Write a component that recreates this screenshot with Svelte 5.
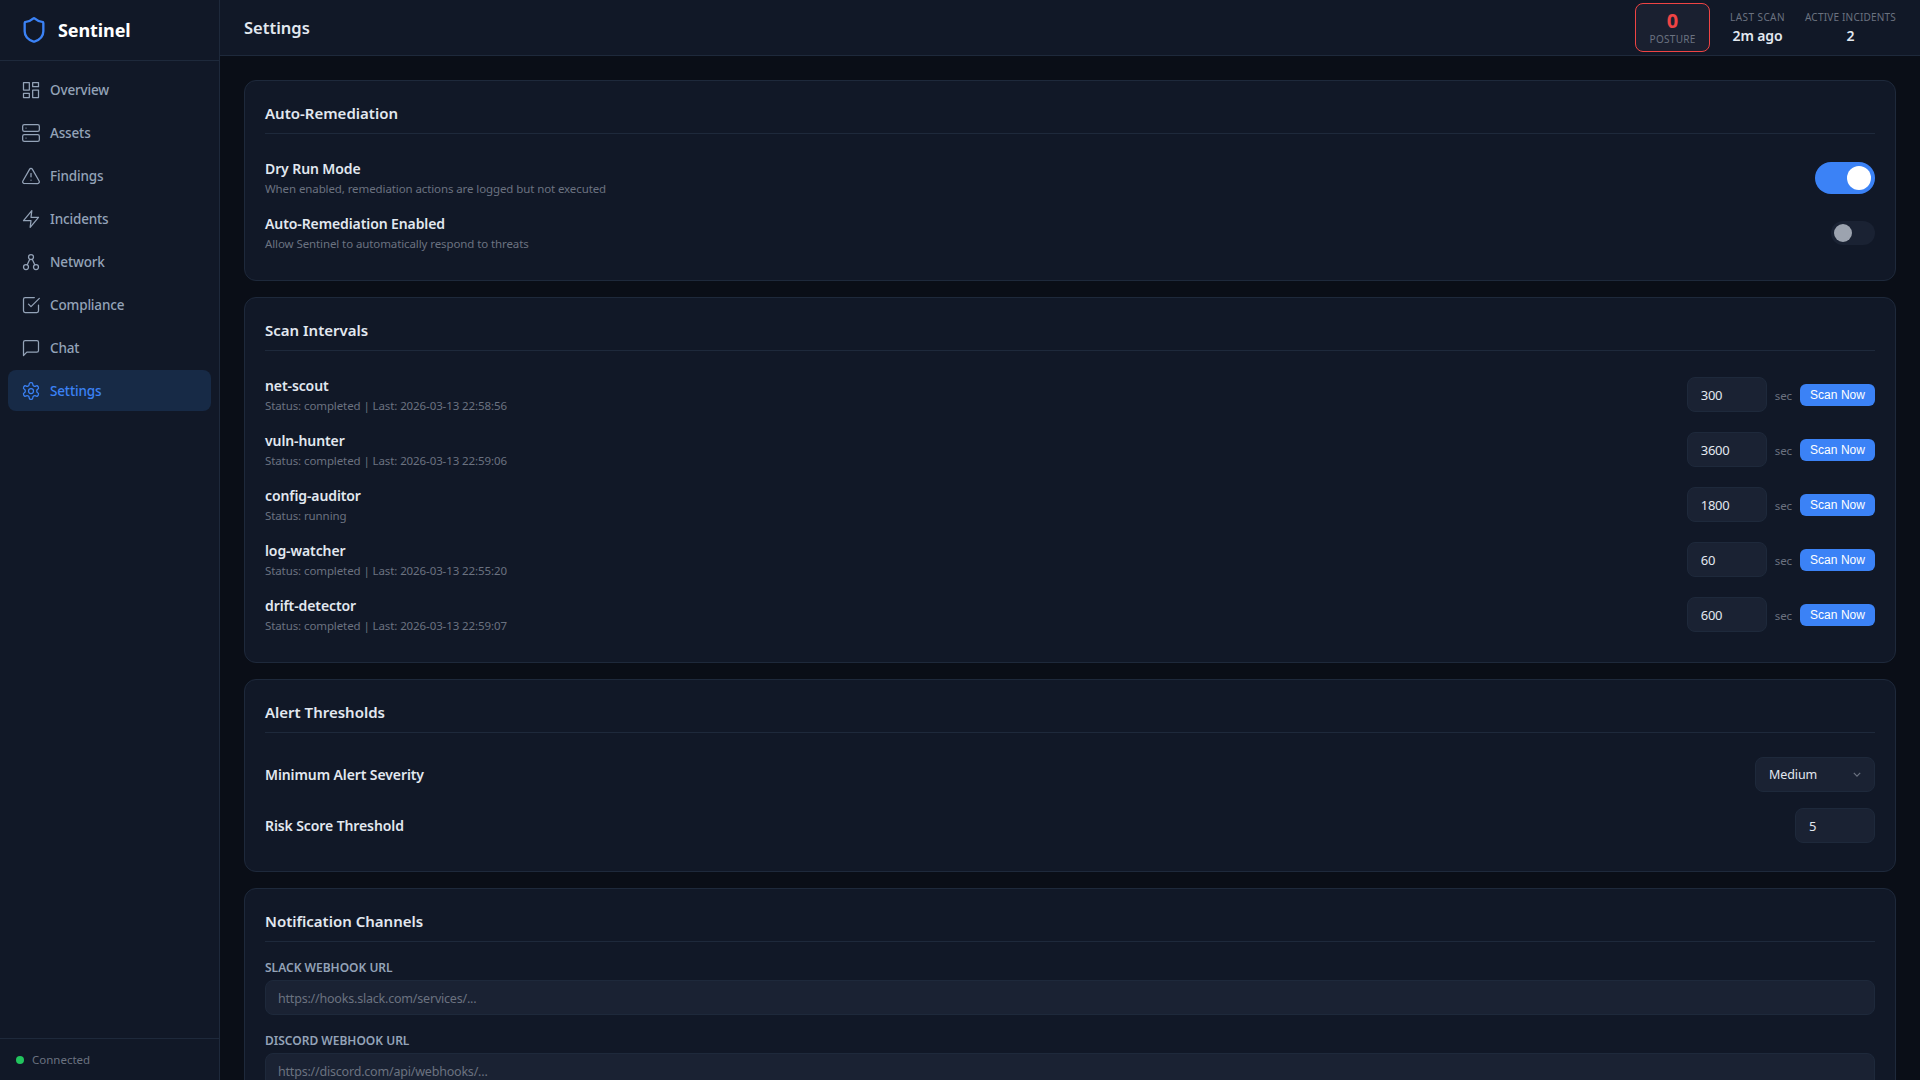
<script>
  const nav = [
    { label: 'Overview', d: ['M3 3h7v9H3z', 'M14 3h7v5h-7z', 'M14 12h7v9h-7z', 'M3 16h7v5H3z'] },
    { label: 'Assets', d: ['M4 2h16a2 2 0 0 1 2 2v4a2 2 0 0 1-2 2H4a2 2 0 0 1-2-2V4a2 2 0 0 1 2-2z', 'M4 14h16a2 2 0 0 1 2 2v4a2 2 0 0 1-2 2H4a2 2 0 0 1-2-2v-4a2 2 0 0 1 2-2z', 'M6 6h.01', 'M6 18h.01'] },
    { label: 'Findings', d: ['m21.73 18-8-14a2 2 0 0 0-3.48 0l-8 14A2 2 0 0 0 4 21h16a2 2 0 0 0 1.73-3Z', 'M12 9v4', 'M12 17h.01'] },
    { label: 'Incidents', d: ['M13 2 3 14h9l-1 8 10-12h-9l1-8z'] },
    { label: 'Network', d: ['M12 3a3 3 0 1 0 0 6 3 3 0 0 0 0-6z', 'M6 15a3 3 0 1 0 0 6 3 3 0 0 0 0-6z', 'M18 15a3 3 0 1 0 0 6 3 3 0 0 0 0-6z', 'M10.5 8.6 7.5 15.4', 'M13.5 8.6l3 6.8'] },
    { label: 'Compliance', d: ['m9 11 3 3L22 4', 'M21 12v7a2 2 0 0 1-2 2H5a2 2 0 0 1-2-2V5a2 2 0 0 1 2-2h11'] },
    { label: 'Chat', d: ['M21 15a2 2 0 0 1-2 2H7l-4 4V5a2 2 0 0 1 2-2h14a2 2 0 0 1 2 2z'] },
    { label: 'Settings', active: true, d: ['M12.22 2h-.44a2 2 0 0 0-2 2v.18a2 2 0 0 1-1 1.73l-.43.25a2 2 0 0 1-2 0l-.15-.08a2 2 0 0 0-2.73.73l-.22.38a2 2 0 0 0 .73 2.73l.15.1a2 2 0 0 1 1 1.72v.51a2 2 0 0 1-1 1.74l-.15.09a2 2 0 0 0-.73 2.73l.22.38a2 2 0 0 0 2.73.73l.15-.08a2 2 0 0 1 2 0l.43.25a2 2 0 0 1 1 1.73V20a2 2 0 0 0 2 2h.44a2 2 0 0 0 2-2v-.18a2 2 0 0 1 1-1.73l.43-.25a2 2 0 0 1 2 0l.15.08a2 2 0 0 0 2.73-.73l.22-.39a2 2 0 0 0-.73-2.73l-.15-.08a2 2 0 0 1-1-1.74v-.5a2 2 0 0 1 1-1.74l.15-.09a2 2 0 0 0 .73-2.73l-.22-.38a2 2 0 0 0-2.73-.73l-.15.08a2 2 0 0 1-2 0l-.43-.25a2 2 0 0 1-1-1.73V4a2 2 0 0 0-2-2z', 'M12 9a3 3 0 1 0 0 6 3 3 0 0 0 0-6z'] }
  ];
  const scans = [
    { name: 'net-scout', status: 'Status: completed | Last: 2026-03-13 22:58:56', value: '300' },
    { name: 'vuln-hunter', status: 'Status: completed | Last: 2026-03-13 22:59:06', value: '3600' },
    { name: 'config-auditor', status: 'Status: running', value: '1800' },
    { name: 'log-watcher', status: 'Status: completed | Last: 2026-03-13 22:55:20', value: '60' },
    { name: 'drift-detector', status: 'Status: completed | Last: 2026-03-13 22:59:07', value: '600' }
  ];
</script>

<div class="app">
  <aside class="sidebar">
    <div class="brand">
      <svg viewBox="0 0 24 24" width="28" height="28" fill="none" stroke="#3b82f6" stroke-width="2" stroke-linecap="round" stroke-linejoin="round"><path d="M20 13c0 5-3.5 7.5-7.66 8.95a1 1 0 0 1-.67-.01C7.5 20.5 4 18 4 13V6a1 1 0 0 1 1-1c2 0 4.5-1.2 6.24-2.72a1.17 1.17 0 0 1 1.52 0C14.51 3.81 17 5 19 5a1 1 0 0 1 1 1z"/></svg>
      <span>Sentinel</span>
    </div>
    <nav class="nav">
      {#each nav as item}
        <div class="nav-item" class:active={item.active}>
          <svg viewBox="0 0 24 24" width="20" height="20" fill="none" stroke="currentColor" stroke-width="1.5" stroke-linecap="round" stroke-linejoin="round">
            {#each item.d as d}<path {d} />{/each}
          </svg>
          <span>{item.label}</span>
        </div>
      {/each}
    </nav>
    <div class="conn"><i></i><span>Connected</span></div>
  </aside>
  <div class="main">
    <header class="top">
      <h1>Settings</h1>
      <div class="stats">
        <div class="posture"><b>0</b><small>POSTURE</small></div>
        <div class="stat first"><small>LAST SCAN</small><b>2m ago</b></div>
        <div class="stat"><small>ACTIVE INCIDENTS</small><b>2</b></div>
      </div>
    </header>
    <main class="content">
      <section class="card">
        <h2>Auto-Remediation</h2>
        <div class="row">
          <div class="txt"><div class="lbl">Dry Run Mode</div><div class="sub">When enabled, remediation actions are logged but not executed</div></div>
          <div class="toggle big"><i></i></div>
        </div>
        <div class="row">
          <div class="txt"><div class="lbl">Auto-Remediation Enabled</div><div class="sub">Allow Sentinel to automatically respond to threats</div></div>
          <div class="toggle"><i></i></div>
        </div>
      </section>
      <section class="card">
        <h2>Scan Intervals</h2>
        {#each scans as s}
          <div class="row">
            <div class="txt"><div class="lbl">{s.name}</div><div class="sub">{s.status}</div></div>
            <div class="ctl">
              <input class="field" value={s.value} />
              <span class="sec">sec</span>
              <button>Scan Now</button>
            </div>
          </div>
        {/each}
      </section>
      <section class="card">
        <h2>Alert Thresholds</h2>
        <div class="row">
          <div class="lbl">Minimum Alert Severity</div>
          <div class="select"><span>Medium</span>
            <svg viewBox="0 0 10 6" width="8" height="5" fill="none" stroke="#6b7280" stroke-width="1.5"><path d="M1 1l4 4 4-4"/></svg>
          </div>
        </div>
        <div class="row">
          <div class="lbl">Risk Score Threshold</div>
          <input class="field" value="5" />
        </div>
      </section>
      <section class="card">
        <h2>Notification Channels</h2>
        <label class="cap" for="slack">SLACK WEBHOOK URL</label>
        <input id="slack" class="wide" placeholder="https://hooks.slack.com/services/..." />
        <label class="cap" for="discord">DISCORD WEBHOOK URL</label>
        <input id="discord" class="wide" placeholder="https://discord.com/api/webhooks/..." />
      </section>
    </main>
  </div>
</div>

<style>
  :global(body) { margin: 0; background: #0a0e17; overflow: hidden; }
  .app { display: flex; height: 1080px; overflow: hidden; font-family: "Noto Sans", "Open Sans", sans-serif; color: #e2e8f0; background: #0a0e17; }
  .sidebar { width: 220px; flex: none; box-sizing: border-box; display: flex; flex-direction: column; background: #111827; border-right: 1px solid #1e293b; }
  .brand { height: 61px; box-sizing: border-box; display: flex; align-items: center; gap: 10px; padding: 0 20px; border-bottom: 1px solid #1e293b; color: #fff; font-weight: 700; font-size: 18px; letter-spacing: -.1px; }
  .nav { flex: 1; padding: 8px 8px; display: flex; flex-direction: column; gap: 2px; }
  .nav-item { height: 41px; display: flex; align-items: center; gap: 9px; padding: 0 13px; border-radius: 8px; font-size: 13.5px; letter-spacing: -.15px; font-weight: 500; color: #94a3b8; width: 203px; box-sizing: border-box; }
  .nav-item.active { background: #172a46; color: #3b82f6; }
  .conn { height: 42px; box-sizing: border-box; border-top: 1px solid #1e293b; display: flex; align-items: center; gap: 8px; padding: 0 16px; font-size: 11.5px; color: #6b7280; }
  .conn i { width: 8px; height: 8px; border-radius: 50%; background: #22c55e; }
  .main { flex: 1; min-width: 0; display: flex; flex-direction: column; }
  .top { height: 56px; flex: none; box-sizing: border-box; display: flex; justify-content: space-between; align-items: center; padding: 0 24px; background: #111827; border-bottom: 1px solid #1e293b; }
  h1 { margin: 0 0 1px; font-size: 16.5px; font-weight: 600; color: #e2e8f0; }
  .stats { display: flex; align-items: center; gap: 20px; }
  .posture { width: 75px; height: 49px; box-sizing: border-box; display: flex; flex-direction: column; align-items: center; justify-content: center; border: 1px solid #ef4444; border-radius: 8px; background: #1a2030; }
  .posture b { font-size: 20px; line-height: 22px; color: #ef4444; font-weight: 700; }
  .posture small { font-size: 10px; line-height: 14px; letter-spacing: .3px; color: #6b7280; }
  .stat { display: flex; flex-direction: column; align-items: center; padding-top: 2px; }
  .stat small { font-size: 10px; line-height: 15px; letter-spacing: .2px; color: #6b7280; }
  .stat.first small { letter-spacing: .42px; }
  .stat b { font-size: 14px; line-height: 22px; letter-spacing: -.1px; font-weight: 600; color: #e2e8f0; }
  .content { flex: 1; padding: 24px; display: flex; flex-direction: column; gap: 16px; overflow: hidden; }
  .card { flex: none; background: #111827; border: 1px solid #1e293b; border-radius: 12px; padding: 20px; }
  h2 { margin: 0 0 16px; padding: 1px 0 9px; font-size: 15px; line-height: 22px; font-weight: 600; border-bottom: 1px solid #1e293b; color: #e2e8f0; }
  .row { padding: 8px 0; display: flex; justify-content: space-between; align-items: center; }
  .lbl { font-size: 14px; line-height: 21px; letter-spacing: -.1px; font-weight: 600; color: #e2e8f0; }
  .sub { font-size: 11.5px; line-height: 16px; padding-top: 2px; letter-spacing: -.1px; color: #6b7280; }
  .toggle { width: 44px; height: 24px; border-radius: 12px; background: #1a2233; display: flex; align-items: center; padding: 0 3px; box-sizing: border-box; }
  .toggle i { width: 18px; height: 18px; border-radius: 50%; background: #9ca3af; }
  .toggle.big { width: 60px; height: 32px; border-radius: 16px; background: #3b82f6; justify-content: flex-end; padding: 0 4px; }
  .toggle.big i { width: 24px; height: 24px; background: #fff; }
  .ctl { display: flex; align-items: center; }
  .field { width: 80px; height: 35px; box-sizing: border-box; padding: 0 13px; background: #1a2233; border: 1px solid #1e293b; border-radius: 8px; color: #e2e8f0; font: 13px "Noto Sans", sans-serif; letter-spacing: -.3px; outline: none; }
  .sec { font-size: 11.5px; letter-spacing: -.1px; color: #6b7280; margin: 0 8px 0 8px; padding-top: 1px; }
  button { width: 75px; height: 22px; border: 0; border-radius: 6px; padding: 0; background: #3b82f6; color: #fff; font: 12px "Liberation Sans", sans-serif; letter-spacing: .05px; }
  .select { width: 120px; height: 35px; box-sizing: border-box; padding: 0 13px; display: flex; align-items: center; justify-content: space-between; background: #1a2233; border: 1px solid #1e293b; border-radius: 8px; font-size: 12.5px; letter-spacing: -.1px; color: #e2e8f0; }
  .cap { display: block; margin-top: 18px; font-size: 12px; line-height: 16px; font-weight: 600; color: #94a3b8; margin-bottom: 4px; }
  .wide { display: block; width: 100%; height: 35px; box-sizing: border-box; padding: 2px 12px 0; background: #1a2233; border: 1px solid #1e293b; border-radius: 8px; font: 12.5px "Noto Sans", sans-serif; letter-spacing: -.2px; color: #e2e8f0; outline: none; }
  .wide::placeholder { color: #6b7280; opacity: 1; }
</style>
